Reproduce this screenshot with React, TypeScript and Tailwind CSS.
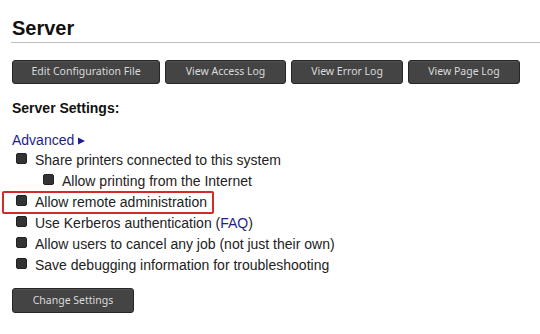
import React from "react";

const btn =
  "h-[24px] flex items-center justify-center rounded-[3px] border border-[#262626] bg-[#444444] text-[#dadada] text-[10.5px] shadow-[inset_0_1px_0_rgba(255,255,255,0.08)] [font-family:'Noto_Sans',sans-serif]";

function Box() {
  return <span className="mt-[3px] w-[11px] h-[11px] shrink-0 rounded-[2px] bg-[#333333] border border-[#222]" />;
}

function Row({ children, indent }: { children: React.ReactNode; indent?: boolean }) {
  return (
    <div className={`flex items-start h-[21px] leading-[21px] ${indent ? "pl-[31px]" : "pl-[4px]"}`}>
      <Box />
      <span className="ml-[8px] text-[14px] text-[#222]">{children}</span>
    </div>
  );
}

export default function App() {
  return (
    <div className="w-[540px] h-[334px] bg-white overflow-hidden pl-[12px] pt-[16px] [font-family:'Liberation_Sans',Arial,sans-serif]">
      <h1 className="text-[20px] leading-[24px] font-bold text-[#111] pb-[2px] border-b border-[#bdbdbd] -ml-[1px] pl-[1px]">
        Server
      </h1>
      <div className="flex gap-[5px] mt-[17px]">
        <div className={`${btn} w-[148px]`}>Edit Configuration File</div>
        <div className={`${btn} w-[121px]`}>View Access Log</div>
        <div className={`${btn} w-[112px]`}>View Error Log</div>
        <div className={`${btn} w-[112px]`}>View Page Log</div>
      </div>
      <div className="mt-[15.5px] text-[14px] leading-[16px] font-bold text-[#111]">Server Settings:</div>
      <div className="mt-[16px] text-[14px] leading-[16px] text-[#1e1e8c] flex items-center">
        Advanced
        <svg width="8" height="8" viewBox="0 0 8 8" className="ml-[4px] mt-[3px]">
          <path d="M0 0.5 L7 4 L0 7.5 Z" fill="#1e1e8c" />
        </svg>
      </div>
      <div className="mt-[2px]">
        <Row>Share printers connected to this system</Row>
        <Row indent>Allow printing from the Internet</Row>
        <div className="relative">
          <Row>Allow remote administration</Row>
          <div className="absolute left-[-10px] top-[-1px] w-[212px] h-[23px] border-2 border-[#d42a2a] rounded-[2px]" />
        </div>
        <Row>
          Use Kerberos authentication (<span className="text-[#1e1e8c]">FAQ</span>)
        </Row>
        <Row>Allow users to cancel any job (not just their own)</Row>
        <Row>Save debugging information for troubleshooting</Row>
      </div>
      <div className={`${btn} w-[122px] h-[25px] mt-[12.5px]`}>Change Settings</div>
    </div>
  );
}
